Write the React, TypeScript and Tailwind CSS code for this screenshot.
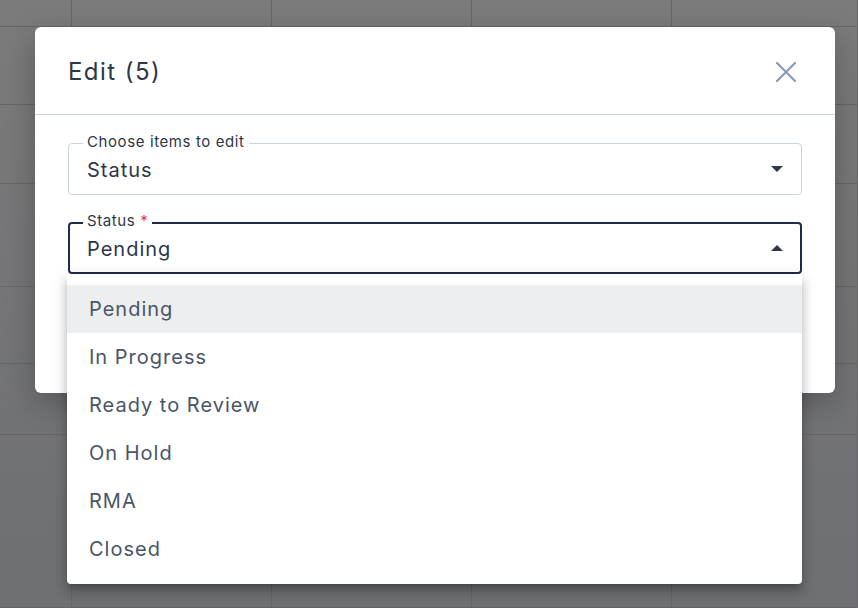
const rows = [27, 78, 79, 103, 77, 71, 173];
const cols = [72, 200, 200, 200, 186];
const options = ["Pending", "In Progress", "Ready to Review", "On Hold", "RMA", "Closed"];

function Caret({ up }: { up?: boolean }) {
  return (
    <svg width="12" height="6" viewBox="0 0 12 6" className="text-[#2d3748]">
      <path d={up ? "M0 6 L6 0 L12 6 Z" : "M0 0 L12 0 L6 6 Z"} fill="currentColor" />
    </svg>
  );
}

export default function App() {
  return (
    <div
      className="relative w-[858px] h-[608px] overflow-hidden bg-gradient-to-b from-[#7b7b7b] to-[#6e6f73]"
      style={{ fontFamily: "Inter, 'Noto Sans', sans-serif" }}
    >
      {/* table behind the overlay */}
      <div className="flex flex-col">
        {rows.map((h, i) => (
          <div key={i} className="flex border-b border-[#666666]" style={{ height: h }}>
            {cols.map((w, j) => (
              <div key={j} className="border-r border-[#666666]" style={{ width: w }} />
            ))}
          </div>
        ))}
      </div>

      {/* modal */}
      <div className="absolute left-[35px] top-[27px] w-[800px] h-[366px] bg-white rounded-[6px] shadow-[0_10px_30px_rgba(0,0,0,0.25)]">
        <div className="flex items-center justify-between h-[88px] pl-[33px] pr-[39px] pt-[2px] border-b border-[#cbd5e1]">
          <h2 className="text-[24px] tracking-[0.06em] text-[#2d3748] font-normal">Edit (5)</h2>
          <svg width="20" height="20" viewBox="0 0 20 20" className="text-[#8a9ab3]">
            <path d="M1 1 L19 19 M19 1 L1 19" stroke="currentColor" strokeWidth="2.2" strokeLinecap="round" />
          </svg>
        </div>
        <div className="px-[33px] pt-[28px] flex flex-col gap-[27px]">
          <div className="relative h-[52px] rounded-[4px] border border-[#cbd5e1] flex items-center justify-between pl-[18px] pr-[18px]">
            <span className="absolute -top-[12px] left-[14px] bg-white px-[4px] text-[15px] tracking-[0.04em] leading-[20px] text-[#2d3748]">
              Choose items to edit
            </span>
            <span className="text-[20px] tracking-[0.05em] text-[#2d3748] pt-[2px]">Status</span>
            <Caret />
          </div>
          <div className="relative h-[52px] rounded-[4px] border-2 border-[#1e2b4a] flex items-center justify-between pl-[17px] pr-[17px]">
            <span className="absolute -top-[13px] left-[13px] bg-white px-[4px] text-[15px] tracking-[0.04em] leading-[20px] text-[#2d3748]">
              Status <span className="text-[#e53e3e]">*</span>
            </span>
            <span className="text-[20px] tracking-[0.05em] text-[#2d3748] pt-[2px]">Pending</span>
            <Caret up />
          </div>
        </div>
      </div>

      {/* dropdown menu */}
      <div className="absolute left-[67px] top-[274px] w-[735px] py-[11px] bg-white rounded-[4px] shadow-[0_5px_5px_-3px_rgba(0,0,0,0.2),0_8px_10px_1px_rgba(0,0,0,0.14),0_3px_14px_2px_rgba(0,0,0,0.12)]">
        {options.map((o, i) => (
          <div
            key={o}
            className={`h-[48px] flex items-center pl-[22px] text-[20px] tracking-[0.05em] text-[#4a5568] ${i === 0 ? "bg-[#edeef0]" : ""}`}
          >
            {o}
          </div>
        ))}
      </div>
    </div>
  );
}
